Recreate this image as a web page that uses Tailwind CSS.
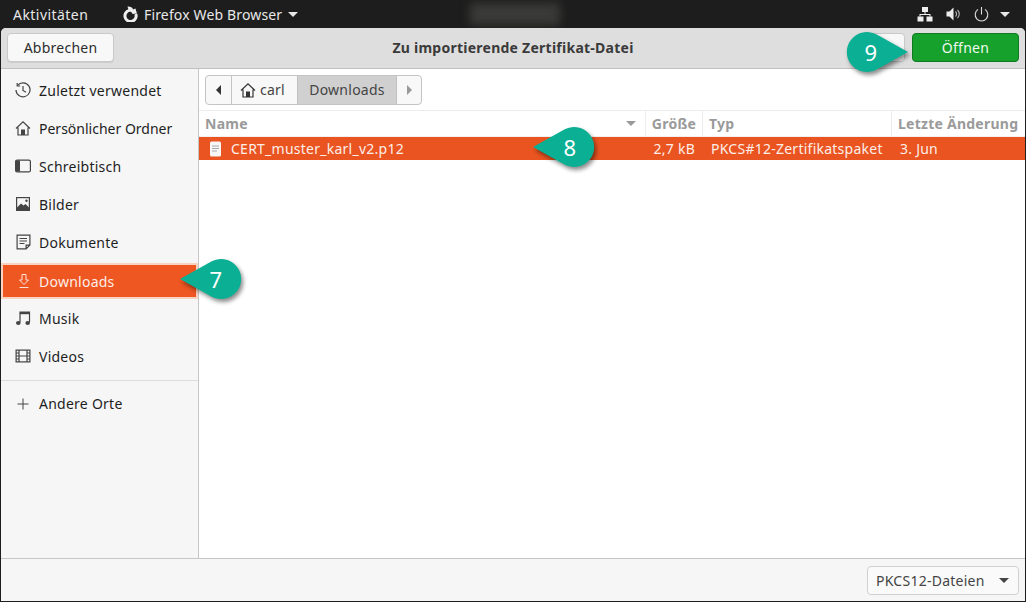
<!DOCTYPE html>
<html>
<head>
<meta charset="utf-8">
<script src="https://cdn.jsdelivr.net/npm/@tailwindcss/browser@4"></script>
<title>Zu importierende Zertifikat-Datei</title>
</head>
<body class="m-0 h-[602px] w-[1026px] overflow-hidden bg-[#1d1d1d] font-['Noto_Sans',sans-serif] text-[14px] tracking-[0.25px] text-[#2d2d2d]">
<div class="relative flex h-[602px] w-[1026px] flex-col">
    <!-- top panel -->
    <div class="flex h-[28px] shrink-0 items-center text-[#e8e8e8]">
        <span class="ml-[13px] w-[109px] tracking-[0.45px]">Aktivitäten</span>
        <svg class="h-[16px] w-[16px]" viewBox="0 0 16 16"><path d="M7.5 4.4A5.6 5.6 0 1 0 13.8 8" fill="none" stroke="#eee" stroke-width="3"/><path d="M5.5 0.6Q10 0.4 11 3.4L13.4 2.4 15 7.4 10.4 8Q10 5.2 7 5.4Z" fill="#eee"/></svg>
        <span class="ml-[6px] tracking-[0.15px]">Firefox Web Browser</span>
        <span class="ml-[6px] h-0 w-0 border-x-[5px] border-t-[5px] border-x-transparent border-t-[#e8e8e8]"></span>
        <div class="ml-[172px] h-[22px] w-[90px] bg-[#3a3a38] blur-[5px]"></div>
        <div class="ml-auto flex items-center">
            <svg class="h-[16px] w-[16px]" viewBox="0 0 16 16" fill="#eee"><rect x="5" y="1" width="6" height="5"/><rect x="0.5" y="10.5" width="6" height="5"/><rect x="9.5" y="10.5" width="6" height="5"/><path d="M7.5 6h1v2h5v2.5h-1V9h-9v1.5h-1V8h5z"/></svg>
            <svg class="ml-[13px] h-[16px] w-[16px]" viewBox="0 0 16 16"><path d="M0.5 5.5h3l4-4v13l-4-4h-3z" fill="#eee"/><path d="M9.5 5.5a3.5 3.5 0 0 1 0 5M11.5 3.8a6 6 0 0 1 0 8.4" fill="none" stroke="#bbb" stroke-width="1.1"/></svg>
            <svg class="ml-[12px] h-[15px] w-[15px]" viewBox="0 0 15 15" fill="none" stroke="#ddd" stroke-width="1.1"><path d="M7.5 0v7.5M4 2.4a6.3 6.3 0 1 0 7 0"/></svg>
            <span class="ml-[11px] mr-[16px] h-0 w-0 border-x-[5px] border-t-[5px] border-x-transparent border-t-[#e8e8e8]"></span>
        </div>
    </div>

    <!-- dialog -->
    <div class="mx-[1px] mb-[1px] flex min-h-0 flex-1 flex-col overflow-hidden rounded-t-[5px] bg-white">
        <!-- header bar -->
        <div class="relative flex h-[41px] shrink-0 items-start justify-between border-b border-[#c0c0c0] bg-[#dedede] pl-[6px] pr-[6px] pt-[5px]">
            <button class="h-[29px] w-[107px] rounded-[4px] border border-[#c9c9c9] bg-[#f8f8f8] shadow-[0_1px_0_#ccc]">Abbrechen</button>
            <span class="absolute left-0 right-0 top-[9px] text-center text-[14px] font-bold text-[#3a3a3a]">Zu importierende Zertifikat-Datei</span>
            <div class="relative flex items-center gap-[7px]">
                <div class="h-[29px] w-[40px] rounded-[4px] border border-[#c9c9c9] bg-[#f8f8f8]"></div>
                <button class="h-[29px] w-[107px] rounded-[4px] border border-[#0f7a1f] bg-[#15a12c] text-[#eef8ee]">Öffnen</button>
            </div>
        </div>

        <div class="flex min-h-0 flex-1">
            <!-- sidebar -->
            <aside class="flex w-[198px] shrink-0 flex-col border-r border-[#c6c6c6] bg-[#f6f6f6] pt-[2px] text-[#1e1e1e]">
                <div class="flex h-[38px] items-center pl-[14px]">
                    <svg class="h-[16px] w-[16px]" viewBox="0 0 16 16" fill="none" stroke="#444" stroke-width="1.2"><path d="M2.6 3.4A7 7 0 1 1 1 8"/><path d="M2.2 1v3h3M8 4v4.4l3 1.8"/></svg>
                    <span class="ml-[8px]">Zuletzt verwendet</span>
                </div>
                <div class="flex h-[38px] items-center pl-[14px]">
                    <svg class="h-[16px] w-[16px]" viewBox="0 0 16 16"><path d="M1 8.5 8 1.8l7 6.7M3 7.5V15h10V7.5" fill="none" stroke="#444" stroke-width="1.2"/><rect x="6" y="9.5" width="4" height="5.5" fill="#444"/></svg>
                    <span class="ml-[8px] tracking-normal">Persönlicher Ordner</span>
                </div>
                <div class="flex h-[38px] items-center pl-[14px]">
                    <svg class="h-[16px] w-[16px]" viewBox="0 0 16 16"><rect x="0.6" y="2.1" width="14.8" height="11.8" rx="1.5" fill="none" stroke="#444" stroke-width="1.2"/><rect x="1" y="2.5" width="4" height="11" fill="#444"/></svg>
                    <span class="ml-[8px]">Schreibtisch</span>
                </div>
                <div class="flex h-[38px] items-center pl-[14px]">
                    <svg class="h-[16px] w-[16px]" viewBox="0 0 16 16"><rect x="1.6" y="1.6" width="12.8" height="12.8" fill="none" stroke="#444" stroke-width="1.2"/><path d="M2 11.5 6 7.5l2.5 2 2-1.5 3.5 3.5V14H2z" fill="#444"/><circle cx="11.5" cy="4.8" r="1.2" fill="#444"/><rect x="2" y="12" width="12" height="2.5" fill="#444"/></svg>
                    <span class="ml-[8px]">Bilder</span>
                </div>
                <div class="flex h-[38px] items-center pl-[14px]">
                    <svg class="h-[16px] w-[16px]" viewBox="0 0 16 16" fill="none" stroke="#444" stroke-width="1.2"><path d="M2.1 1.1h12.8v10l-3.8 3.8H2.1zM4.5 4.5h7.5M4.5 7h7.5M4.5 9.5h5M14.5 11.2h-3.4v3.4"/></svg>
                    <span class="ml-[8px]">Dokumente</span>
                </div>
                <div class="mx-[2px] mb-[2px] mt-[4px] flex h-[32px] items-center bg-[#ee5622] pl-[13px] text-[#fdeee8] shadow-[0_0_0_2px_#f8d3c2]">
                    <svg class="h-[16px] w-[16px]" viewBox="0 0 16 16" fill="none" stroke="#fbe3d9" stroke-width="1"><path d="M6 1.5h4v5.5h2.5L8 11.5 3.5 7H6zM3.5 14.5h9"/></svg>
                    <span class="ml-[7px]">Downloads</span>
                </div>
                <div class="flex h-[38px] items-center pl-[14px]">
                    <svg class="h-[16px] w-[16px]" viewBox="0 0 16 16"><path d="M5 12.5V2.2h9.5v10" fill="none" stroke="#444" stroke-width="1.2"/><path d="M5 2h9.5v2.2H5z" fill="#444"/><ellipse cx="3.3" cy="13" rx="2.3" ry="1.9" fill="#444"/><ellipse cx="12.7" cy="13" rx="2.3" ry="1.9" fill="#444"/></svg>
                    <span class="ml-[8px]">Musik</span>
                </div>
                <div class="flex h-[38px] items-center pl-[14px]">
                    <svg class="h-[16px] w-[16px]" viewBox="0 0 16 16" fill="none" stroke="#444" stroke-width="1.2"><rect x="1.1" y="2.1" width="13.8" height="11.8"/><path d="M4 2v12M12 2v12M4 8h8M1 5h3M1 8h3M1 11h3M12 5h3M12 8h3M12 11h3"/></svg>
                    <span class="ml-[8px]">Videos</span>
                </div>
                <div class="mt-[5px] border-t border-[#dcdcdc]"></div>
                <div class="flex h-[45px] items-center pl-[14px]">
                    <svg class="h-[16px] w-[16px]" viewBox="0 0 16 16" fill="none" stroke="#444" stroke-width="1"><path d="M8 2.5v11M2.5 8h11"/></svg>
                    <span class="ml-[8px]">Andere Orte</span>
                </div>
            </aside>

            <!-- file pane -->
            <main class="flex min-w-0 flex-1 flex-col bg-white">
                <div class="flex h-[42px] shrink-0 items-center border-b border-[#ececec] pl-[6px]">
                    <div class="flex h-[30px] items-stretch overflow-hidden rounded-[4px] border border-[#c4c4c4] bg-[#f8f8f8] text-[#444]">
                        <div class="flex w-[26px] items-center justify-center border-r border-[#c4c4c4]"><span class="h-0 w-0 border-y-[5px] border-r-[5px] border-y-transparent border-r-[#333]"></span></div>
                        <div class="flex w-[65px] items-center pl-[8px]">
                            <svg class="h-[16px] w-[16px]" viewBox="0 0 16 16"><path d="M1 8.5 8 1.8l7 6.7M3 7.5V15h10V7.5" fill="none" stroke="#333" stroke-width="1.2"/><rect x="6" y="9.5" width="4" height="5.5" fill="#333"/></svg>
                            <span class="ml-[4px]">carl</span>
                        </div>
                        <div class="flex w-[100px] items-center justify-center border-x border-[#c0c0c0] bg-[#d0d0d0]">Downloads</div>
                        <div class="flex w-[24px] items-center justify-center"><span class="h-0 w-0 border-y-[5px] border-l-[5px] border-y-transparent border-l-[#999]"></span></div>
                    </div>
                </div>
                <!-- column headers -->
                <div class="flex h-[26px] shrink-0 items-center border-b border-[#f0f0f0] font-bold text-[#9a9a9a]">
                    <div class="relative flex h-full w-[446px] items-center pl-[6px]">Name
                        <span class="absolute right-[9px] h-0 w-0 border-x-[5px] border-t-[5px] border-x-transparent border-t-[#999]"></span>
                    </div>
                    <div class="flex h-full w-[57px] items-center justify-center border-l border-[#ececec]">Größe</div>
                    <div class="flex h-full w-[189px] items-center border-l border-[#ececec] pl-[6px]">Typ</div>
                    <div class="flex h-full flex-1 items-center border-l border-[#ececec] pl-[6px]">Letzte Änderung</div>
                </div>
                <!-- selected row -->
                <div class="flex h-[23px] shrink-0 items-center bg-[#e95420] text-[#fdeee8]">
                    <div class="flex w-[447px] items-center pl-[10px]">
                        <svg class="h-[16px] w-[14px]" viewBox="0 0 14 16"><rect x="1" y="0.5" width="11" height="15" rx="1.5" fill="#f6f6f6"/><path d="M3 5h7M3 7.5h7M3 10h5" stroke="#aaa"/></svg>
                        <span class="ml-[8px]">CERT_muster_karl_v2.p12</span>
                    </div>
                    <div class="w-[57px] pr-[8px] text-right">2,7 kB</div>
                    <div class="w-[189px] pl-[8px] whitespace-nowrap">PKCS#12-Zertifikatspaket</div>
                    <div class="flex-1 pl-[8px]">3. Jun</div>
                </div>
                <div class="flex-1"></div>
            </main>
        </div>

        <!-- footer -->
        <div class="flex h-[43px] shrink-0 items-center justify-end border-t border-[#c6c6c6] bg-[#f6f6f6] pr-[6px]">
            <div class="flex h-[29px] w-[152px] items-center justify-between rounded-[4px] border border-[#d0d0d0] bg-[#fafafa] pl-[8px] pr-[9px] text-[#444]">
                <span>PKCS12-Dateien</span>
                <span class="h-0 w-0 border-x-[5px] border-t-[5px] border-x-transparent border-t-[#444]"></span>
            </div>
        </div>
    </div>

    <!-- callouts over the dialog -->
    <div class="absolute left-[180px] top-[259px] h-[40px] w-[62px]">
        <svg class="h-[40px] w-[62px] drop-shadow-[2px_3px_2px_rgba(0,0,0,0.45)]" viewBox="0 0 62 40"><path d="M0 20 31.3 2.6A20 20 0 1 1 31.3 37.4Z" fill="#0bb094"/></svg>
        <span class="absolute left-[16px] top-0 w-[40px] text-center text-[22px] leading-[40px] text-white">7</span>
    </div>
    <div class="absolute left-[533px] top-[127px] h-[40px] w-[62px]">
        <svg class="h-[40px] w-[62px] drop-shadow-[2px_3px_2px_rgba(0,0,0,0.45)]" viewBox="0 0 62 40"><path d="M0 20 31.3 2.6A20 20 0 1 1 31.3 37.4Z" fill="#0bb094"/></svg>
        <span class="absolute left-[17px] top-0 w-[40px] text-center text-[22px] leading-[40px] text-white">8</span>
    </div>
    <div class="absolute left-[846px] top-[32px] h-[40px] w-[62px]">
        <svg class="h-[40px] w-[62px] drop-shadow-[2px_3px_2px_rgba(0,0,0,0.45)]" viewBox="0 0 62 40"><path d="M62 20 30.7 2.6A20 20 0 1 0 30.7 37.4Z" fill="#0bb094"/></svg>
        <span class="absolute left-[5px] top-0 w-[40px] text-center text-[22px] leading-[40px] text-white">9</span>
    </div>
</div>
</body>
</html>
